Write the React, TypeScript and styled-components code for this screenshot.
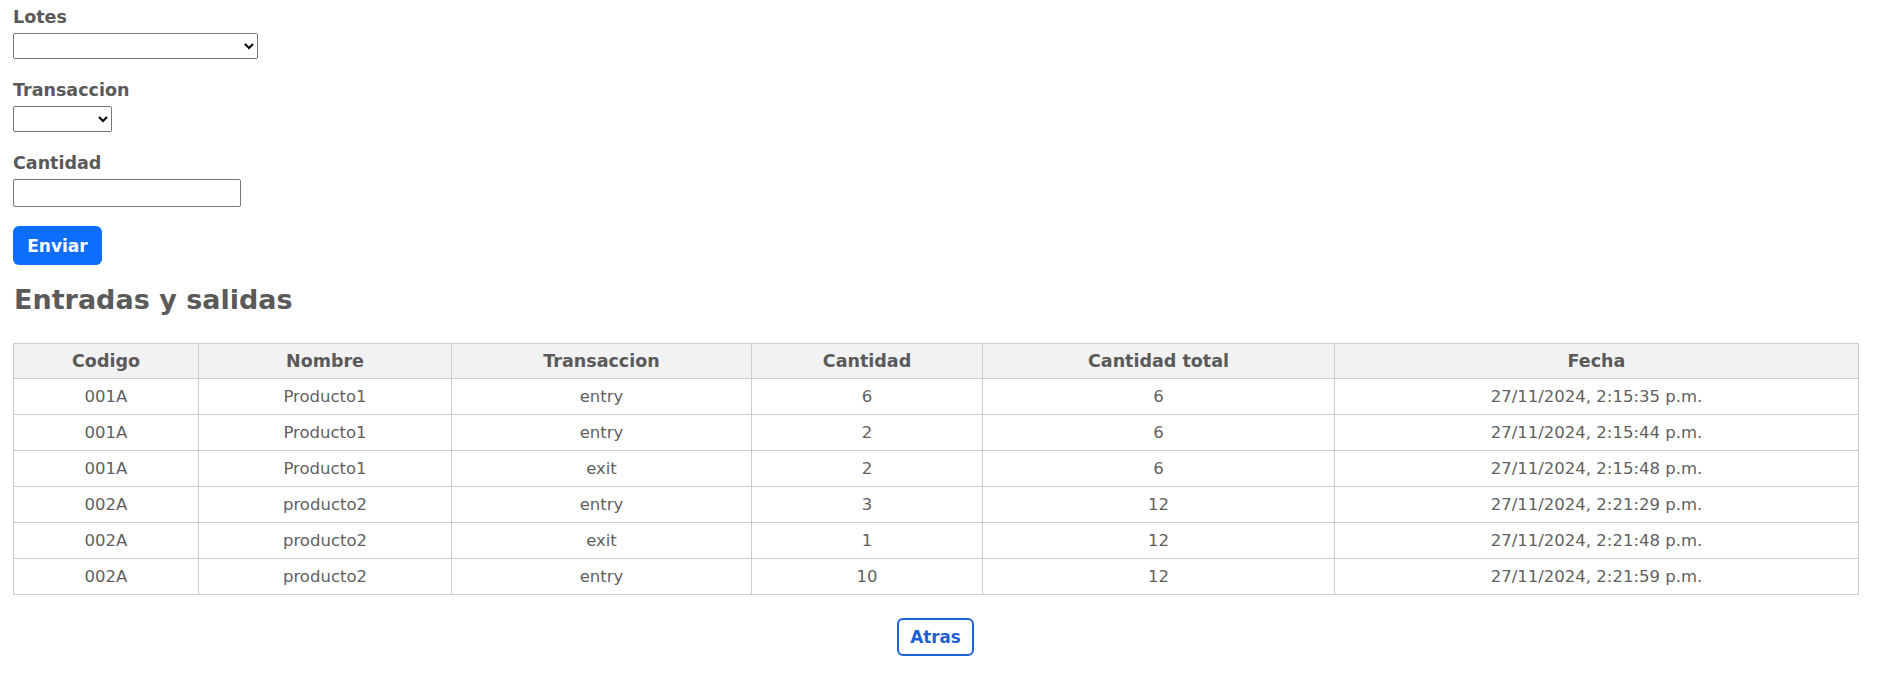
import React from "react";
import styled, { createGlobalStyle } from "styled-components";

const FONT = `"DejaVu Sans", Inter, sans-serif`;

const GlobalStyle = createGlobalStyle`
  html, body { margin: 0; padding: 0; background: #ffffff; }
  body { font-family: ${FONT}; color: #5a5a5a; }
`;

const Page = styled.div`
  padding: 5px 19px 0 13px;
  display: flex;
  flex-direction: column;
`;

const Form = styled.form`
  display: flex;
  flex-direction: column;
  align-items: flex-start;
`;

const Group = styled.div`
  display: flex;
  flex-direction: column;
  align-items: flex-start;
  margin-bottom: 19px;
`;

const Label = styled.label`
  font-size: 17.5px;
  font-weight: 700;
  line-height: 24px;
  color: #595959;
  margin-bottom: 4px;
`;

const Select = styled.select<{ $w: number }>`
  width: ${(p) => p.$w}px;
  height: 26px;
  font-size: 14px;
  box-sizing: border-box;
`;

const Input = styled.input`
  width: 228px;
  height: 28px;
  box-sizing: border-box;
  border: 1px solid #767676;
  border-radius: 2px;
`;

const SubmitButton = styled.button`
  width: 89px;
  height: 39px;
  border: none;
  border-radius: 6px;
  background: #0d6efd;
  color: #ffffff;
  font-family: ${FONT};
  font-weight: 700;
  font-size: 17px;
  cursor: pointer;
`;

const Heading = styled.h2`
  margin: 15px 0 0 1px;
  font-size: 27px;
  line-height: 40px;
  font-weight: 700;
  color: #5a5a5a;
`;

const Table = styled.table`
  margin-top: 23px;
  width: 100%;
  border-collapse: collapse;
  table-layout: fixed;
  font-size: 16.5px;
  color: #5f5f5f;
`;

const Th = styled.th`
  background: #f2f2f2;
  border: 1px solid #cccccc;
  height: 34px;
  padding: 0 8px;
  font-size: 17.5px;
  font-weight: 700;
  text-align: center;
  color: #5a5a5a;
`;

const Td = styled.td`
  border: 1px solid #cccccc;
  height: 35px;
  padding: 0 8px;
  text-align: center;
`;

const Footer = styled.div`
  display: flex;
  justify-content: center;
  margin-top: 23px;
`;

const BackButton = styled.button`
  width: 77px;
  height: 38px;
  background: #ffffff;
  border: 2px solid #1d63d8;
  border-radius: 6px;
  color: #1d5fd3;
  font-family: ${FONT};
  font-weight: 700;
  font-size: 16.8px;
  cursor: pointer;
`;

const cols = [185, 253, 300, 231, 352, 524];

const rows = [
  ["001A", "Producto1", "entry", "6", "6", "27/11/2024, 2:15:35 p.m."],
  ["001A", "Producto1", "entry", "2", "6", "27/11/2024, 2:15:44 p.m."],
  ["001A", "Producto1", "exit", "2", "6", "27/11/2024, 2:15:48 p.m."],
  ["002A", "producto2", "entry", "3", "12", "27/11/2024, 2:21:29 p.m."],
  ["002A", "producto2", "exit", "1", "12", "27/11/2024, 2:21:48 p.m."],
  ["002A", "producto2", "entry", "10", "12", "27/11/2024, 2:21:59 p.m."],
];

const headers = ["Codigo", "Nombre", "Transaccion", "Cantidad", "Cantidad total", "Fecha"];

export default function App() {
  return (
    <>
      <GlobalStyle />
      <Page>
        <Form onSubmit={(e) => e.preventDefault()}>
          <Group>
            <Label htmlFor="lotes">Lotes</Label>
            <Select id="lotes" $w={245}>
              <option value=""></option>
            </Select>
          </Group>
          <Group>
            <Label htmlFor="trans">Transaccion</Label>
            <Select id="trans" $w={99}>
              <option value=""></option>
            </Select>
          </Group>
          <Group>
            <Label htmlFor="cant">Cantidad</Label>
            <Input id="cant" type="text" />
          </Group>
          <SubmitButton type="submit">Enviar</SubmitButton>
        </Form>
        <Heading>Entradas y salidas</Heading>
        <Table>
          <colgroup>
            {cols.map((w, i) => (
              <col key={i} style={{ width: `${w}px` }} />
            ))}
          </colgroup>
          <thead>
            <tr>
              {headers.map((h) => (
                <Th key={h}>{h}</Th>
              ))}
            </tr>
          </thead>
          <tbody>
            {rows.map((r, i) => (
              <tr key={i}>
                {r.map((c, j) => (
                  <Td key={j}>{c}</Td>
                ))}
              </tr>
            ))}
          </tbody>
        </Table>
        <Footer>
          <BackButton type="button">Atras</BackButton>
        </Footer>
      </Page>
    </>
  );
}
